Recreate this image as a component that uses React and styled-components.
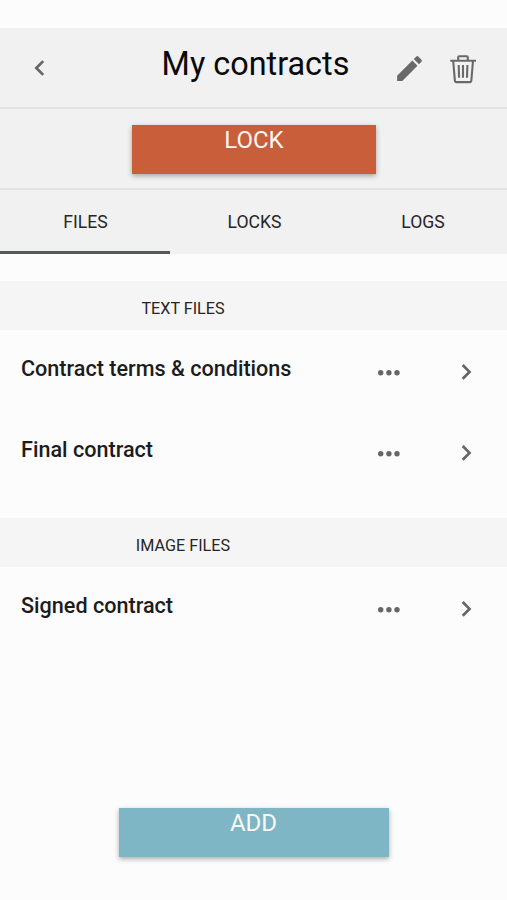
import React from "react";
import styled, { createGlobalStyle } from "styled-components";

const GlobalStyle = createGlobalStyle`
  * { box-sizing: border-box; }
  body { margin: 0; background: #fcfcfc; font-family: Roboto, "Liberation Sans", sans-serif; }
  button { font: inherit; color: inherit; border: 0; padding: 0; background: none; }
  svg { display: block; }
`;

const Screen = styled.div`
  display: flex;
  flex-direction: column;
  width: 507px;
  height: 900px;
  padding-top: 28px;
  overflow: hidden;
  background: #fcfcfc;
`;

const Header = styled.header`
  display: grid;
  grid-template-columns: 120px 271px 58px 58px;
  height: 81px;
  background: #f1f1f1;
  border-bottom: 2px solid #e3e3e3;
`;

const Title = styled.h1`
  margin: 0;
  padding-top: 16px;
  text-align: center;
  font-size: 32.4px;
  font-weight: 400;
  line-height: 40px;
  white-space: nowrap;
  color: #0a0a0a;
`;

const IconButton = styled.button`
  display: flex;
  align-items: flex-start;
  padding: ${(p) => p.$pad};
`;

const LockBar = styled.section`
  display: flex;
  justify-content: center;
  height: 81px;
  padding: 16px 0 0 1px;
  background: #f1f1f1;
  border-bottom: 2px solid #e3e3e3;
`;

const ActionButton = styled.button`
  display: block;
  width: ${(p) => p.$width}px;
  height: 49px;
  padding-bottom: 19px;
  background: ${(p) => p.$color};
  color: #fdf6f2;
  font-size: 24px;
  line-height: 30px;
  text-align: center;
  box-shadow: 0 2px 5px rgba(0, 0, 0, 0.32);
`;

const Tabs = styled.nav`
  display: grid;
  grid-template-columns: 170px 168px 169px;
  height: 64px;
  background: #f1f1f1;
`;

const Tab = styled.button`
  height: 64px;
  padding: 3px 0 0 1px;
  border-bottom: 3px solid ${(p) => (p.$active ? "#555856" : "transparent")};
  font-size: 17.6px;
  line-height: 58px;
  color: #262626;
`;

const Section = styled.section`
  padding-top: ${(p) => p.$gap}px;
`;

const SectionTitle = styled.h2`
  width: 100%;
  height: 49px;
  margin: 0;
  padding: 4px 141px 0 0;
  background: #f5f5f5;
  text-align: center;
  font-size: 16.2px;
  font-weight: 400;
  line-height: 48px;
  color: #262626;
`;

const Row = styled.div`
  display: grid;
  grid-template-columns: 356px 84px 46px;
  height: 81px;
  padding-left: 21px;
`;

const FileName = styled.span`
  padding-top: 24px;
  font-size: 21.6px;
  font-weight: 500;
  line-height: 30px;
  white-space: nowrap;
  color: #1c1c1c;
`;

const Footer = styled.footer`
  display: flex;
  justify-content: center;
  margin-top: auto;
  padding-bottom: 43px;
`;

const Chevron = ({ left }) => (
  <svg width="12" height="18" viewBox="0 0 12 18" fill="none" stroke="#666" strokeWidth="2.7">
    <path d={left ? "M10.2 2.1 3.3 9l6.9 6.9" : "M1.7 2 8.5 8.9l-6.8 6.9"} />
  </svg>
);

const Pencil = () => (
  <svg width="33" height="33" viewBox="0 0 24 24" fill="#696969">
    <path d="M3 17.25V21h3.75L17.81 9.94l-3.75-3.75L3 17.25zM20.71 7.04a1 1 0 0 0 0-1.41l-2.34-2.34a1 1 0 0 0-1.41 0l-1.83 1.83 3.75 3.75 1.83-1.83z" />
  </svg>
);

const Trash = () => (
  <svg width="27" height="30" viewBox="0 0 27 30" fill="none" stroke="#696969" strokeWidth="2.1">
    <path d="M.2 6.7h25.8M8.2 6.5V3.2q0-1 1-1h7.6q1 0 1 1v3.3" />
    <path d="M3.2 7l1.7 19.900q.1 1.200 1.200 1.200h14q1.100 0 1.200-1.200L23 7" />
    <path d="M8.700 11l.4 12.700M13 11v12.700M17.400 11l-.4 12.700" />
  </svg>
);

const Dots = () => (
  <svg width="24" height="8" viewBox="0 0 24 8" fill="#666">
    <circle cx="3.7" cy="3.8" r="2.7" />
    <circle cx="11.9" cy="3.8" r="2.7" />
    <circle cx="20" cy="3.8" r="2.7" />
  </svg>
);

const FileRow = ({ name }) => (
  <Row>
    <FileName>{name}</FileName>
    <IconButton $pad="39px 0 0" aria-label="More">
      <Dots />
    </IconButton>
    <IconButton $pad="33px 0 0" aria-label="Open">
      <Chevron />
    </IconButton>
  </Row>
);

export default function App() {
  return (
    <>
      <GlobalStyle />
      <Screen>
        <Header>
          <IconButton $pad="31px 0 0 33px" aria-label="Back">
            <Chevron left />
          </IconButton>
          <Title>My contracts</Title>
          <IconButton $pad="24px 0 0 2px" aria-label="Edit">
            <Pencil />
          </IconButton>
          <IconButton $pad="26px 0 0 1px" aria-label="Delete">
            <Trash />
          </IconButton>
        </Header>
        <LockBar>
          <ActionButton $width={244} $color="#c95e3b">LOCK</ActionButton>
        </LockBar>
        <Tabs>
          <Tab $active>FILES</Tab>
          <Tab>LOCKS</Tab>
          <Tab>LOGS</Tab>
        </Tabs>
        <Section $gap={27}>
          <SectionTitle>TEXT FILES</SectionTitle>
          <FileRow name="Contract terms & conditions" />
          <FileRow name="Final contract" />
        </Section>
        <Section $gap={26}>
          <SectionTitle>IMAGE FILES</SectionTitle>
          <FileRow name="Signed contract" />
        </Section>
        <Footer>
          <ActionButton $width={270} $color="#7eb6c5">ADD</ActionButton>
        </Footer>
      </Screen>
    </>
  );
}
